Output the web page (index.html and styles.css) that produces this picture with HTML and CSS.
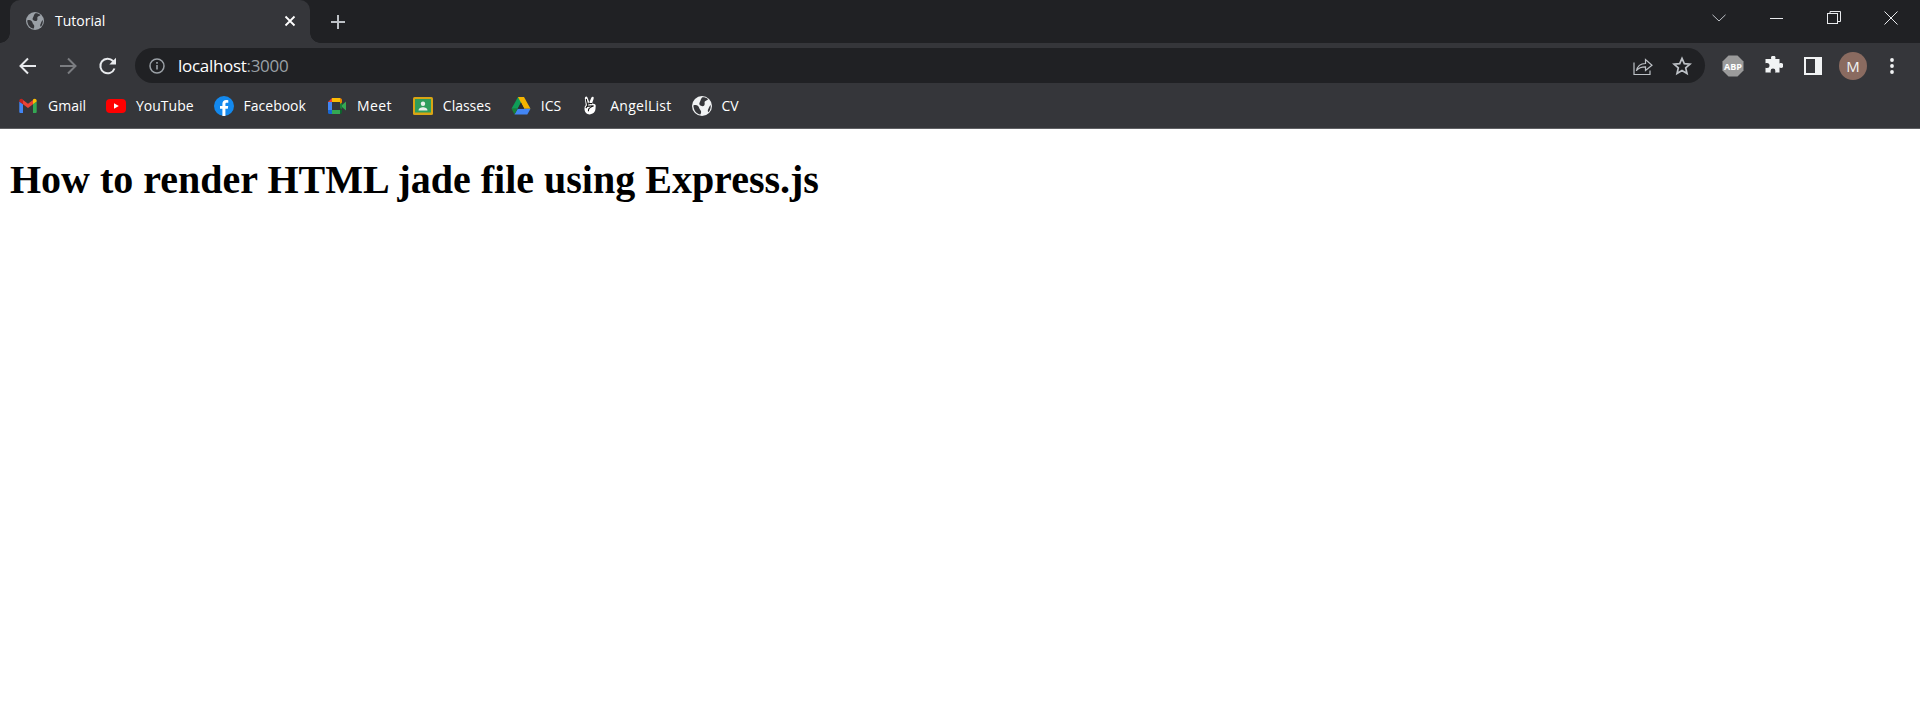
FILE: index.html
```html
<!DOCTYPE html>
<html lang="en">
<head>
<meta charset="utf-8">
<title>Tutorial</title>
<link rel="stylesheet" href="styles.css">
</head>
<body>
<header class="browser">
  <div class="tabstrip">
    <div class="tab">
      <svg class="tab-favicon" viewBox="0 0 18 18"><circle cx="9" cy="9" r="9" fill="#9aa0a6"/><path d="M9.500 1.200c2 0 3.700.5 5 1.700-1 1.100-2.300 1-3 2.100-.6 1 .5 2.100-.5 3.500-1 1.100-3 .6-4-.4-1-1-.1-2.200.5-3.600.5-1.500 1-2.700 2-3.300zM1.200 8.500c1.500-.6 3.300-.6 4.300.5 1 1 1 2.400 2 3.500 1 1 1 2.600 0 4.200C4 16 1.500 13 1.200 8.500zM16.800 8c.3 2.300-.3 4.700-2 6.700-.8-1-.8-2.100 0-3.300.5-1.100 1-2.600 2-3.400z" fill="#35363a"/></svg>
      <span class="tab-title">Tutorial</span>
      <svg class="tab-close" viewBox="0 0 12 12"><path d="M1.500 1.500l9 9M10.500 1.500l-9 9" stroke="#fff" stroke-width="1.800" fill="none"/></svg>
    </div>
    <svg class="new-tab" viewBox="0 0 16 16"><path d="M8 1v14M1 8h14" stroke="#bdc1c6" stroke-width="2" fill="none"/></svg>
    <div class="window-controls">
      <div class="win-btn win-btn-chevron"><svg viewBox="0 0 14 8" width="14" height="8"><path d="M.5.800L7 7l6.500-6.200" stroke="#bdc1c6" stroke-width="1" fill="none"/></svg></div>
      <div class="win-btn"><svg viewBox="0 0 14 14" width="14" height="14"><path d="M0 7.500h13" stroke="#e8eaed" stroke-width="1" fill="none"/></svg></div>
      <div class="win-btn"><svg viewBox="0 0 14 14" width="14" height="14"><rect x=".5" y="2.500" width="10" height="10" stroke="#e8eaed" fill="none"/><path d="M3 2.500V.500h10.500v10h-3" stroke="#e8eaed" fill="none"/></svg></div>
      <div class="win-btn"><svg viewBox="0 0 14 14" width="14" height="14"><path d="M.5.500l13 13M13.500.500l-13 13" stroke="#e8eaed" stroke-width="1" fill="none"/></svg></div>
    </div>
  </div>

  <div class="toolbar">
    <div class="nav">
      <svg class="nav-icon" viewBox="0 0 20 20"><path d="M18 10H3M10 2.500L2.500 10l7.500 7.500" stroke="#e8eaed" stroke-width="2" fill="none"/></svg>
      <svg class="nav-icon" viewBox="0 0 20 20"><path d="M2 10h15M10 2.500l7.500 7.500-7.500 7.500" stroke="#7b7d81" stroke-width="2" fill="none"/></svg>
      <svg class="nav-icon" viewBox="0 0 20 20"><path d="M16.500 12.500a7.300 7.300 0 1 1-1.500-7.500l2 2" stroke="#e8eaed" stroke-width="2" fill="none"/><path d="M18 1.800V8.500h-6.700z" fill="#e8eaed"/></svg>
    </div>
    <div class="omnibox">
      <svg class="omni-info" viewBox="0 0 16 16"><circle cx="8" cy="8" r="7" stroke="#9aa0a6" stroke-width="1.500" fill="none"/><path d="M8 7v4.500M8 4v1.700" stroke="#9aa0a6" stroke-width="1.600" fill="none"/></svg>
      <span class="url"><span class="url-host">localhost</span><span class="url-port">:3000</span></span>
      <svg class="omni-share" viewBox="0 0 20 20"><path d="M1 6.500v12h16v-4M3.500 15c.8-4.800 4-7.500 9-7.500V3.500l6.500 5.700-6.500 5.300v-3.700c-4 0-7 1-9 3.700z" stroke="#bdc1c6" stroke-width="1.200" fill="none"/></svg>
      <svg class="omni-star" viewBox="0 0 20 20"><path d="M10 2.300l2.300 5.300 5.700.5-4.300 3.800 1.300 5.600-5-3-5 3 1.300-5.600L2 8.100l5.700-.5z" stroke="#bdc1c6" stroke-width="1.700" fill="none"/></svg>
    </div>
    <div class="extensions">
      <div class="ext"><svg viewBox="0 0 22 22" width="22" height="22"><path d="M6.500 .5h9l6 6v9l-6 6h-9l-6-6v-9z" fill="#9b9b9b"/><text x="11" y="14.500" class="abp-text">ABP</text></svg></div>
      <div class="ext"><svg viewBox="0 0 20 20" width="20" height="20"><path d="M8 1.500a2.300 2.300 0 0 1 4.500 0c0 .6-.1 1-.2 1.500h4.200v4.500c.5-.3 1-.4 1.500-.4a2.400 2.400 0 0 1 0 4.800c-.5 0-1-.1-1.500-.4v5h-4.500c.3-.5.400-1 .4-1.500a2.400 2.400 0 0 0-4.800 0c0 .5.100 1 .4 1.500H2.500v-4.800c.5.300 1 .3 1.500.3a2.500 2.500 0 0 0 0-5c-.5 0-1 .1-1.500.3V3h5.700c-.1-.5-.2-1-.2-1.500z" fill="#f1f3f4"/></svg></div>
      <div class="ext"><svg viewBox="0 0 18 18" width="18" height="18"><path d="M0 0h18v18H0zM2 2v14h9V2z" fill="#f1f3f4" fill-rule="evenodd"/></svg></div>
      <div class="avatar">M</div>
      <svg class="menu-dots" viewBox="0 0 4 16"><circle cx="2" cy="2" r="1.900" fill="#f1f3f4"/><circle cx="2" cy="8" r="1.900" fill="#f1f3f4"/><circle cx="2" cy="14" r="1.900" fill="#f1f3f4"/></svg>
    </div>
  </div>

  <nav class="bookmarks">
    <a class="bm">
      <svg class="bm-icon" viewBox="0 0 20 16"><path d="M1.300 15V3.500l3.700 2.800V15H2.300a1 1 0 0 1-1-1z" fill="#4285f4"/><path d="M15 15V6.300l3.700-2.800V14a1 1 0 0 1-1 1z" fill="#34a853"/><path d="M5 6.300V2L10 5.800 15 2v4.300L10 10z" fill="#ea4335"/><path d="M1.300 3.500V2.800C1.300 1 3.300 0 4.800 1.200L5 2v4.300z" fill="#c5221f"/><path d="M15 6.300V2l.2-.8c1.500-1.200 3.500-.2 3.500 1.600v.7z" fill="#fbbc04"/></svg>
      <span>Gmail</span>
    </a>
    <a class="bm">
      <svg class="bm-icon" viewBox="0 0 20 14"><rect y="0" width="20" height="14" rx="4" fill="#f00"/><path d="M8 4.200v5.600L12.800 7z" fill="#fff"/></svg>
      <span>YouTube</span>
    </a>
    <a class="bm">
      <svg class="bm-icon" viewBox="0 0 20 20"><circle cx="10" cy="10" r="10" fill="#1389ee"/><path d="M8.400 20v-7.200H6v-2.900h2.400V7.800c0-2.500 1.500-3.800 3.700-3.800 1 0 1.900.1 2.200.2v2.500h-1.500c-1.200 0-1.400.6-1.400 1.400v1.800h2.800l-.4 2.900h-2.400V20z" fill="#fff"/></svg>
      <span>Facebook</span>
    </a>
    <a class="bm bm-meet">
      <svg class="bm-icon" viewBox="0 0 20 18"><path d="M5 1h8v4H5z" fill="#fbbc04"/><path d="M5 1v4H1z" fill="#ea4335"/><path d="M1 5h4v8H1z" fill="#4285f4"/><path d="M1 13h4v4H2.500A1.500 1.500 0 0 1 1 15.500z" fill="#1967d2"/><path d="M5 13h8v4H5z" fill="#34a853"/><path d="M13 1c1 0 2 1 2 2v3l-2 1.500V5z" fill="#ea8600"/><path d="M13 7l2-1.500v7L13 11z" fill="#188038"/><path d="M15 8l4-3.500v9L15 10z" fill="#34a853"/><path d="M13 13v4c1 0 2-1 2-2v-2.500z" fill="#0d652d"/></svg>
      <span>Meet</span>
    </a>
    <a class="bm bm-classes">
      <svg class="bm-icon" viewBox="0 0 20 18"><rect width="20" height="18" rx="1.500" fill="#d9a514"/><rect x="2" y="2" width="16" height="13.500" fill="#2f9e5b"/><circle cx="10" cy="6.700" r="2.200" fill="#e8f0e9"/><path d="M5.500 13.500c0-2.300 2.500-3.200 4.500-3.200s4.500.9 4.500 3.200z" fill="#e8f0e9"/></svg>
      <span>Classes</span>
    </a>
    <a class="bm">
      <svg class="bm-icon" viewBox="0 0 20 18"><path d="M7 0h6l-6.300 11.700H0.500z" fill="#0f9d58"/><path d="M7 0h6l6.500 11.700h-6.300z" fill="#f4b400"/><path d="M6.700 11.700H19.500L16.300 17.500H3.500z" fill="#4285f4"/><path d="M.5 11.700h6.200l-3.200 5.800z" fill="#188038"/><path d="M10 5.500l3.200 6.200H6.700z" fill="#2a2b2e"/></svg>
      <span>ICS</span>
    </a>
    <a class="bm bm-angel">
      <svg class="bm-icon-angel" viewBox="0 0 14 19"><path d="M3.300.6c.9 0 1.300 1 1.700 2.400L6.300 6.500 8.300 1.800C8.700.8 9.800.5 10.400 1c.6.500.3 1.500 0 2.400L9 7.600c1.300.1 3.700.6 3.700 1.800 0 1.300-.2 5-1 6.200-1 1.800-3 2.800-5 2.800C3.600 18.400 1.500 16 1.500 13c0-2 .4-3.300 1.300-3.800L1.900 3C1.700 1.800 2.300.6 3.300.6z" fill="#fff"/><path d="M4.500 8.500L3.200 3M6 7.600l.3-1.100M9 7.600c-1-.2-2.500-.2-4 .5-1 .5-1 1.800 0 2 1.500.2 3-.3 5.500-.4M10.500 9.700c-1.500 1-3.500 1.700-4.500 3-.6.800-.6 1.800-.6 2.500M5 10.100c-1 .2-1.800.8-2 2" stroke="#111" stroke-width="1.100" fill="none"/></svg>
      <span>AngelList</span>
    </a>
    <a class="bm bm-cv">
      <svg class="bm-icon" viewBox="0 0 18 18"><circle cx="9" cy="9" r="9" fill="#f1f3f4"/><path d="M9.500 1.200c2 0 3.700.5 5 1.700-1 1.100-2.300 1-3 2.100-.6 1 .5 2.100-.5 3.500-1 1.100-3 .6-4-.4-1-1-.1-2.200.5-3.600.5-1.500 1-2.700 2-3.300zM1.200 8.500c1.500-.6 3.300-.6 4.300.5 1 1 1 2.400 2 3.500 1 1 1 2.600 0 4.200C4 16 1.500 13 1.200 8.500zM16.800 8c.3 2.300-.3 4.700-2 6.700-.8-1-.8-2.100 0-3.300.5-1.100 1-2.600 2-3.400z" fill="#35363a"/></svg>
      <span>CV</span>
    </a>
  </nav>
</header>
<main class="page">
  <h1 class="heading">How to render HTML jade file using Express.js</h1>
</main>
</body>
</html>
```

FILE: styles.css
```css
* { box-sizing: border-box; }

html, body {
  margin: 0;
  height: 100%;
  background: #fff;
}

body { overflow: hidden; }

.browser {
  font-family: "Open Sans", "Noto Sans", sans-serif;
  color: #fff;
}

.tabstrip {
  display: flex;
  align-items: center;
  height: 43px;
  background: #202124;
  padding-left: 10px;
}

.tab {
  position: relative;
  display: flex;
  align-items: center;
  width: 300px;
  height: 43px;
  padding: 0 14px 2px 16px;
  background: #35363a;
  border-radius: 10px 10px 0 0;
}

.tab::before,
.tab::after {
  content: "";
  position: absolute;
  bottom: 0;
  width: 10px;
  height: 10px;
}

.tab::before {
  left: -10px;
  background: radial-gradient(circle at 0 0, #202124 9.500px, #35363a 10px);
}

.tab::after {
  right: -10px;
  background: radial-gradient(circle at 100% 0, #202124 9.500px, #35363a 10px);
}

.tab-favicon {
  width: 18px;
  height: 18px;
  flex: none;
}

.tab-title {
  flex: 1;
  margin-left: 11px;
  font-size: 14px;
  line-height: 20px;
}

.tab-close {
  width: 12px;
  height: 12px;
  flex: none;
}

.new-tab {
  width: 16px;
  height: 16px;
  margin-left: 20px;
  flex: none;
}

.window-controls {
  display: flex;
  margin-left: auto;
  margin-right: 1px;
  align-self: flex-start;
}

.win-btn {
  display: flex;
  align-items: center;
  justify-content: center;
  width: 57px;
  height: 36px;
}

.win-btn-chevron { width: 59px; }

.toolbar {
  display: flex;
  align-items: center;
  height: 45px;
  background: #35363a;
}

.nav {
  display: flex;
  align-items: center;
  gap: 20px;
  padding-left: 18px;
  width: 135px;
}

.nav-icon {
  width: 20px;
  height: 20px;
  flex: none;
}

.omnibox {
  display: flex;
  align-items: center;
  width: 1570px;
  height: 35px;
  padding: 0 4px 0 14px;
  background: #202124;
  border-radius: 18px;
  flex: none;
}

.omni-info {
  width: 16px;
  height: 16px;
  flex: none;
}

.url {
  flex: 1;
  margin-left: 13px;
  font-size: 17px;
  letter-spacing: -.3px;
}

.url-host { color: #fff; }
.url-port { color: #9aa0a6; }

.omni-share {
  width: 20px;
  height: 20px;
  flex: none;
}

.omni-star {
  width: 20px;
  height: 20px;
  margin-left: 19px;
  margin-right: 9px;
  flex: none;
}

.extensions {
  display: flex;
  align-items: center;
  padding-left: 17px;
}

.ext {
  display: flex;
  align-items: center;
  justify-content: center;
  width: 22px;
  height: 22px;
  margin-right: 18px;
}

.abp-text {
  font: 700 9px "Open Sans", sans-serif;
  fill: #fff;
  text-anchor: middle;
}

.avatar {
  display: flex;
  align-items: center;
  justify-content: center;
  width: 28px;
  height: 28px;
  margin-left: -3px;
  border-radius: 50%;
  background: #8a6b60;
  color: #f1f3f4;
  font-size: 15px;
}

.menu-dots {
  width: 4px;
  height: 16px;
  margin-left: 23px;
  flex: none;
}

.bookmarks {
  display: flex;
  align-items: center;
  gap: 20px;
  height: 41px;
  padding: 0 0 5px 18px;
  background: #35363a;
  border-bottom: 1px solid #5f6063;
}

.bm {
  display: flex;
  align-items: center;
  gap: 10px;
  font-size: 14px;
  color: #fff;
}

.bm-icon {
  width: 20px;
  height: 20px;
  flex: none;
}

.bm-meet { margin-left: 1px; letter-spacing: .4px; }

.bm-classes { margin-left: 1px; }

.bm-angel { gap: 13px; margin-left: 2px; letter-spacing: .25px; }

.bm-icon-angel {
  width: 14px;
  height: 19px;
  flex: none;
}

.bm-cv { margin-left: 1px; gap: 9px; }

.page { padding: 27px 10px 0; }

.heading {
  margin: 0;
  font-family: "Liberation Serif", "Times New Roman", serif;
  font-size: 40px;
  font-weight: 700;
  color: #000;
}
```
